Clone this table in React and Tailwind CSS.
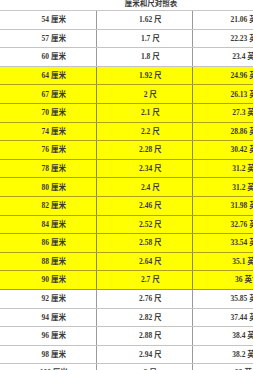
import React from 'react';

const rows = [
  ['54', '1.62', '21.06', false],
  ['57', '1.7', '22.23', false],
  ['60', '1.8', '23.4', false],
  ['64', '1.92', '24.96', true],
  ['67', '2', '26.13', true],
  ['70', '2.1', '27.3', true],
  ['74', '2.2', '28.86', true],
  ['76', '2.28', '30.42', true],
  ['78', '2.34', '31.2', true],
  ['80', '2.4', '31.2', true],
  ['82', '2.46', '31.98', true],
  ['84', '2.52', '32.76', true],
  ['86', '2.58', '33.54', true],
  ['88', '2.64', '35.1', true],
  ['90', '2.7', '36', true],
  ['92', '2.76', '35.85', false],
  ['94', '2.82', '37.44', false],
  ['96', '2.88', '38.4', false],
  ['98', '2.94', '38.2', false],
  ['100', '3', '39', false],
];

function Cell({ children, hl, last }) {
  return (
    <div
      className={`flex h-full w-[96.5px] shrink-0 items-center justify-center pl-[12px] ${
        last ? '' : hl ? 'border-r border-[#8c8a1e]' : 'border-r border-[#9a9a9a]'
      }`}
    >
      {children}
    </div>
  );
}

export default function App() {
  return (
    <div className="h-[370px] w-[253px] overflow-hidden bg-white">
      <div
        className="w-[290px] text-[7.5px] font-bold text-[#3a3a3a]"
        style={{ fontFamily: '"Liberation Serif", "Noto Sans CJK SC", serif' }}
      >
        <div className="flex h-[11px] items-start justify-center overflow-hidden border-b border-[#c8c8c8] pl-[12px] leading-[8px]">
          厘米和尺对照表
        </div>
        {rows.map(([cm, chi, inch, hl]) => (
          <div
            key={cm}
            className={`flex h-[18.6px] border-b ${
              hl ? 'bg-[#ffff00] border-[#a9a51a]' : 'bg-white border-[#c4c4c4]'
            }`}
          >
            <Cell hl={hl}>{cm} 厘米</Cell>
            <Cell hl={hl}>{chi} 尺</Cell>
            <Cell hl={hl} last>
              {inch} 英寸
            </Cell>
          </div>
        ))}
      </div>
    </div>
  );
}
